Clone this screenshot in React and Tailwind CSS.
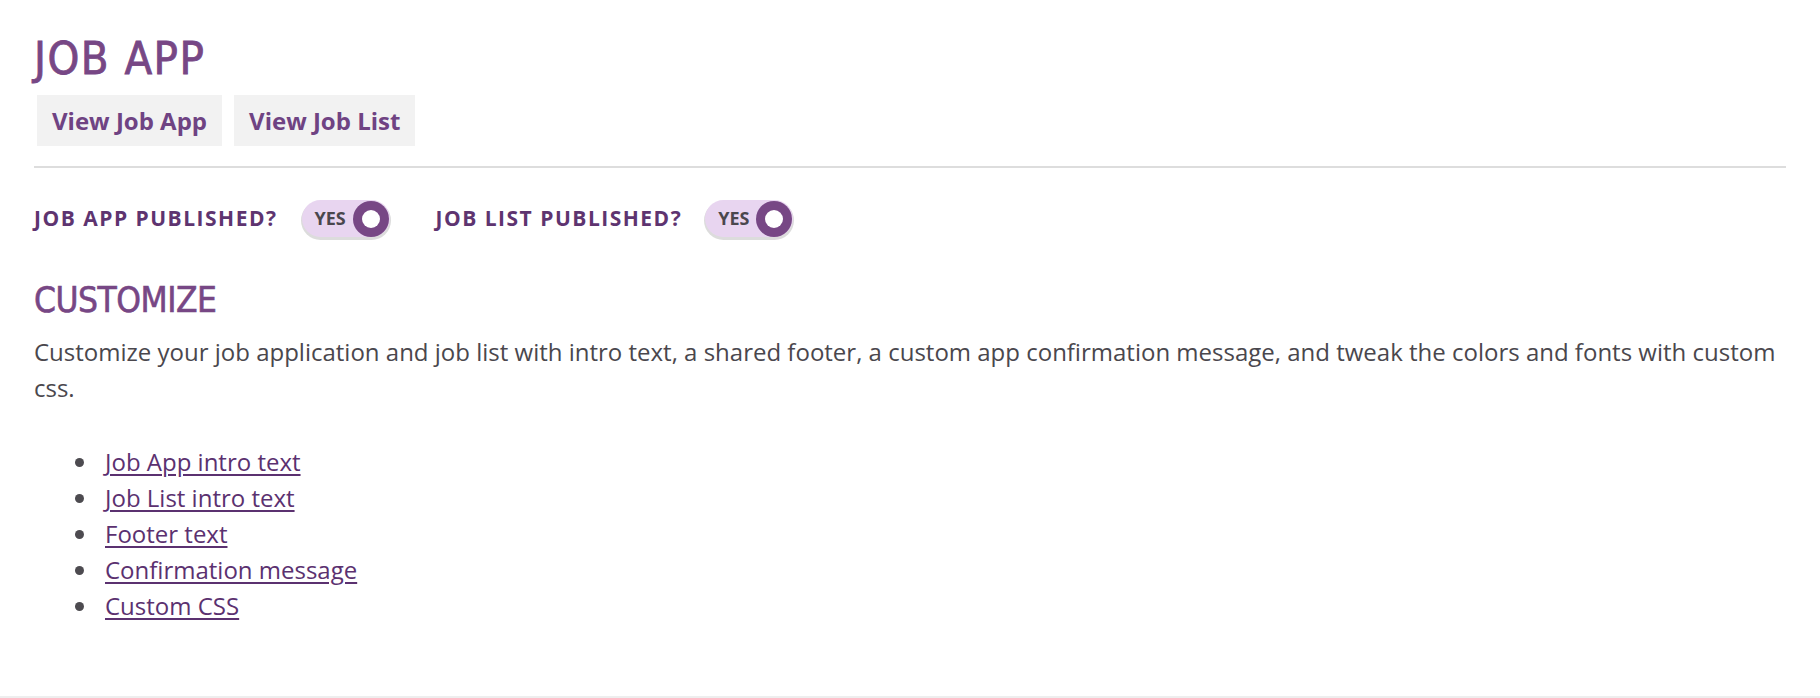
import React, { useState } from "react";

const headFont = { fontFamily: '"DejaVu Sans Condensed", "DejaVu Sans", sans-serif' };

function Toggle({ on, onChange }) {
    return (
        <button
            onClick={onChange}
            className="relative flex items-center w-[88px] h-[37px] rounded-full bg-[#e8d5f0] shadow-[0_2px_0_1px_#dcdcdc] cursor-pointer"
        >
            <span className="pl-[13px] text-[18px] font-bold text-[#4a474d]">{on ? "YES" : "NO"}</span>
            <span className="absolute right-[1px] top-[1px] w-[36px] h-[36px] rounded-full bg-[#774785] flex items-center justify-center">
                <span className="w-[18px] h-[18px] rounded-full bg-white" />
            </span>
        </button>
    );
}

export default function App() {
    const [appPublished, setAppPublished] = useState(true);
    const [listPublished, setListPublished] = useState(true);

    const links = [
        "Job App intro text",
        "Job List intro text",
        "Footer text",
        "Confirmation message",
        "Custom CSS",
    ];

    return (
        <div
            className="min-h-[698px] bg-white px-[34px] pt-[36px] border-b-2 border-[#eeeeee] text-[#4a474d]"
            style={{ fontFamily: '"Open Sans", sans-serif' }}
        >
            <h1
                className="text-[45px] leading-none text-[#774785] tracking-[1.5px] [-webkit-text-stroke:0.8px_#774785]"
                style={headFont}
            >
                JOB APP
            </h1>

            <div className="flex gap-[12px] mt-[14px] ml-[3px]">
                <a href="#" className="h-[51px] px-[15px] flex items-center bg-[#f2f2f2] text-[24px] font-bold text-[#6f4383]">
                    View Job App
                </a>
                <a href="#" className="h-[51px] px-[15px] flex items-center bg-[#f2f2f2] text-[24px] font-bold text-[#6f4383]">
                    View Job List
                </a>
            </div>

            <div className="h-[2px] bg-[#dddddd] mt-[20px]" />

            <div className="flex items-center mt-[32px]">
                <span className="text-[21px] font-bold tracking-[1.5px] text-[#5e3470]">JOB APP PUBLISHED?</span>
                <div className="ml-[24px]">
                    <Toggle on={appPublished} onChange={() => setAppPublished(!appPublished)} />
                </div>
                <span className="ml-[46px] text-[21px] font-bold tracking-[1.5px] text-[#5e3470]">JOB LIST PUBLISHED?</span>
                <div className="ml-[23px]">
                    <Toggle on={listPublished} onChange={() => setListPublished(!listPublished)} />
                </div>
            </div>

            <h2
                className="mt-[46px] text-[35px] leading-none text-[#774785] tracking-[-0.5px] [-webkit-text-stroke:0.6px_#774785]"
                style={headFont}
            >
                CUSTOMIZE
            </h2>

            <p className="mt-[16px] text-[24px] leading-[36px]">
                Customize your job application and job list with intro text, a shared footer, a custom app confirmation message, and tweak the colors and fonts with custom css.
            </p>

            <ul className="mt-[38px] pl-[65px] list-disc text-[24px] leading-[36px] marker:text-[#4d4b50]">
                {links.map(l => (
                    <li key={l} className="pl-[6px]">
                        <a href="#" className="underline underline-offset-[3px] text-[#5b3170]">{l}</a>
                    </li>
                ))}
            </ul>
        </div>
    );
}
